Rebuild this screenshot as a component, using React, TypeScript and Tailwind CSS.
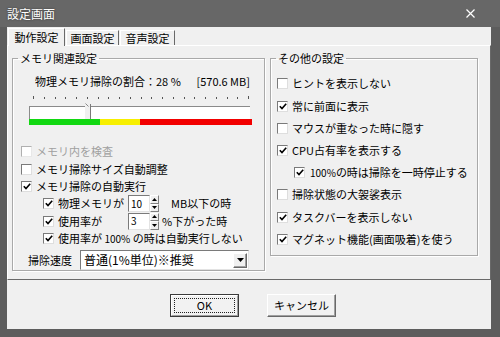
import React from "react";

type CheckProps = { checked?: boolean; disabled?: boolean };

const CheckBox: React.FC<CheckProps> = ({ checked, disabled }) => (
  <span
    className={`flex h-[11px] w-[11px] shrink-0 items-center justify-center border bg-white ${
      disabled
        ? "border-t-[#b0b0b0] border-l-[#b0b0b0] border-r-[#e8e8e8] border-b-[#e8e8e8]"
        : "border-t-[#7a7a7a] border-l-[#7a7a7a] border-r-[#dedede] border-b-[#dedede]"
    }`}
  >
    {checked && (
      <svg width="8" height="7" viewBox="0 0 8 7">
        <path d="M0.8 3.2 L3 5.6 L7.2 0.8" stroke="#000" strokeWidth="1.6" fill="none" />
      </svg>
    )}
  </span>
);

interface RowProps {
  checked?: boolean;
  disabled?: boolean;
  indent: string;
  height: string;
  gap?: string;
  children: React.ReactNode;
}

const CheckRow: React.FC<RowProps> = ({ checked, disabled, indent, height, gap = "gap-[4px]", children }) => (
  <div className={`flex items-center ${indent} ${height} ${gap}`}>
    <CheckBox checked={checked} disabled={disabled} />
    <span className={`whitespace-nowrap leading-none ${disabled ? "text-[#a0a0a0]" : "text-black"}`}>{children}</span>
  </div>
);

const SpinBox: React.FC<{ value: string }> = ({ value }) => (
  <div className="flex h-[17px] items-stretch">
    <div className="flex w-[22px] items-center border border-t-[#7a7a7a] border-l-[#7a7a7a] border-r-[#e3e3e3] border-b-[#e3e3e3] bg-white pl-[2px] text-[10px] leading-none">
      {value}
    </div>
    <div className="flex w-[9px] flex-col">
      <div className="flex flex-1 items-center justify-center border border-t-white border-l-white border-r-[#808080] border-b-[#808080] bg-[#f0f0f0]">
        <svg width="5" height="3" viewBox="0 0 5 3">
          <path d="M0 3 L2.5 0 L5 3 Z" fill="#000" />
        </svg>
      </div>
      <div className="flex flex-1 items-center justify-center border border-t-white border-l-white border-r-[#808080] border-b-[#808080] bg-[#f0f0f0]">
        <svg width="5" height="3" viewBox="0 0 5 3">
          <path d="M0 0 L2.5 3 L5 0 Z" fill="#000" />
        </svg>
      </div>
    </div>
  </div>
);

const MemorySlider: React.FC = () => {
  const ticks = Array.from({ length: 21 }, (_, i) => 4 + i * 10.75);
  return (
    <svg width="224" height="32" viewBox="0 0 224 32" className="ml-[16px] mt-[7px] block">
      {ticks.map((x, i) => (
        <rect
          key={i}
          x={Math.round(x)}
          y={i === 0 || i === 20 ? 1 : 2}
          width="1"
          height={i === 0 || i === 20 ? 3 : 2}
          fill="#555"
        />
      ))}
      {/* track */}
      <rect x="0" y="11" width="221" height="13" fill="#fff" />
      <rect x="0" y="11" width="221" height="1" fill="#8a8a8a" />
      <rect x="0" y="11" width="1" height="13" fill="#8a8a8a" />
      {/* thumb */}
      <polygon points="56,11 58,8 62,11 62,24 56,24" fill="#f0f0f0" />
      <path d="M56.5 8.5 L59.5 11.5" stroke="#8a8a8a" strokeWidth="1" />
      <rect x="61" y="9" width="1" height="15" fill="#7a7a7a" />
      {/* level bar */}
      <rect x="0" y="24" width="71" height="6" fill="#12d812" />
      <rect x="71" y="24" width="40" height="6" fill="#f7ef00" />
      <rect x="111" y="24" width="112" height="6" fill="#f20000" />
    </svg>
  );
};

const App: React.FC = () => {
  return (
    <div className="flex h-[337px] w-[500px] flex-col overflow-hidden bg-[#5d5d5d] font-['Noto_Sans_CJK_JP','Noto_Sans_CJK_SC',sans-serif] text-[11px] text-black">
      {/* title bar */}
      <div className="flex h-[27px] shrink-0 items-center justify-between bg-[#676767] pl-[7px] pr-[25px]">
        <span className="text-[12px] leading-none text-white [text-shadow:0_0_2px_#333]">設定画面</span>
        <svg width="9" height="9" viewBox="0 0 9 9">
          <path d="M0.5 0.5 L8.5 8.5 M8.5 0.5 L0.5 8.5" stroke="#fff" strokeWidth="1.2" />
        </svg>
      </div>

      {/* window body */}
      <div className="ml-[7px] flex h-[302px] w-[484px] shrink-0 flex-col bg-[#f0f0f0]">
        {/* tabs */}
        <div className="flex h-[18px] shrink-0 items-end">
          <div className="relative z-10 -mb-px ml-px flex h-[18px] w-[57px] items-center justify-center border border-b-0 border-t-white border-l-white border-r-[#696969] bg-[#f0f0f0] leading-none">
            動作設定
          </div>
          <div className="ml-px flex h-[15px] w-[53px] items-center justify-center border border-b-0 border-t-white border-l-white border-r-[#696969] leading-none">
            画面設定
          </div>
          <div className="ml-px flex h-[15px] w-[55px] items-center justify-center border border-b-0 border-t-white border-l-white border-r-[#696969] leading-none">
            音声設定
          </div>
        </div>

        {/* tab panel */}
        <div className="flex h-[235px] shrink-0 items-start gap-[5px] border border-t-white border-l-white border-r-[#696969] border-b-[#696969] pl-[4px] pt-[6px]">
          {/* memory group */}
          <fieldset className="h-[219px] w-[253px] border border-[#a9a9a9] shadow-[inset_1px_1px_0_#fff,1px_1px_0_#fff]">
            <legend className="ml-[5px] px-[2px] text-[11px] leading-[12px]">メモリ関連設定</legend>
            <div className="ml-[22px] mt-[10px] flex h-[14px] w-[215px] items-center justify-between text-[11px] leading-none">
              <span>物理メモリ掃除の割合：28 %</span>
              <span>[570.6 MB]</span>
            </div>
            <MemorySlider />
            <div className="mt-[15px]">
              <CheckRow disabled indent="ml-[8px]" height="h-[18px]">
                メモリ内を検査
              </CheckRow>
              <CheckRow indent="ml-[8px]" height="h-[18px]">
                メモリ掃除サイズ自動調整
              </CheckRow>
              <CheckRow checked indent="ml-[8px]" height="h-[17px]">
                メモリ掃除の自動実行
              </CheckRow>
              <div className="ml-[30px] flex h-[17px] items-center">
                <CheckBox checked />
                <span className="ml-[4px] w-[70px] whitespace-nowrap leading-none">物理メモリが</span>
                <SpinBox value="10" />
                <span className="ml-[12px] whitespace-nowrap leading-none">MB以下の時</span>
              </div>
              <div className="ml-[30px] flex h-[18px] items-center">
                <CheckBox checked />
                <span className="ml-[4px] w-[70px] whitespace-nowrap leading-none">使用率が</span>
                <SpinBox value="3" />
                <span className="ml-[3px] whitespace-nowrap leading-none">%下がった時</span>
              </div>
              <CheckRow checked indent="ml-[30px]" height="h-[17px]">
                使用率が <span className="text-[10px]">100%</span> の時は自動実行しない
              </CheckRow>
              <div className="mt-[3px] flex h-[20px] items-center">
                <span className="ml-[15px] w-[52px] whitespace-nowrap leading-none">掃除速度</span>
                <div className="flex h-[20px] w-[169px] items-center justify-between border border-t-[#7a7a7a] border-l-[#7a7a7a] border-r-[#e3e3e3] border-b-[#e3e3e3] bg-white pl-[3px] pr-[1px]">
                  <span className="whitespace-nowrap text-[12px] leading-none">普通(1%単位)※推奨</span>
                  <div className="flex h-[15px] w-[14px] items-center justify-center border border-t-white border-l-white border-r-[#696969] border-b-[#696969] bg-[#f0f0f0] shadow-[inset_-1px_-1px_0_#a0a0a0]">
                    <svg width="7" height="4" viewBox="0 0 7 4">
                      <path d="M0 0 L3.5 4 L7 0 Z" fill="#000" />
                    </svg>
                  </div>
                </div>
              </div>
            </div>
          </fieldset>

          {/* other settings group */}
          <fieldset className="h-[204px] w-[208px] border border-[#a9a9a9] shadow-[inset_1px_1px_0_#fff,1px_1px_0_#fff]">
            <legend className="ml-[5px] px-[2px] text-[11px] leading-[12px]">その他の設定</legend>
            <div className="mt-[8px]">
              <CheckRow indent="ml-[6px]" height="h-[23px]">
                ヒントを表示しない
              </CheckRow>
              <CheckRow checked indent="ml-[6px]" height="h-[22px]">
                常に前面に表示
              </CheckRow>
              <CheckRow indent="ml-[6px]" height="h-[22px]">
                マウスが重なった時に隠す
              </CheckRow>
              <CheckRow checked indent="ml-[6px]" height="h-[22px]">
                CPU占有率を表示する
              </CheckRow>
              <CheckRow checked indent="ml-[23px]" height="h-[22px]" gap="gap-[5px]">
                <span className="text-[10px]">100%</span>の時は掃除を一時停止する
              </CheckRow>
              <CheckRow indent="ml-[6px]" height="h-[23px]">
                掃除状態の大袈裟表示
              </CheckRow>
              <CheckRow checked indent="ml-[6px]" height="h-[22px]">
                タスクバーを表示しない
              </CheckRow>
              <CheckRow checked indent="ml-[6px]" height="h-[22px]">
                マグネット機能(画面吸着)を使う
              </CheckRow>
            </div>
          </fieldset>
        </div>

        {/* footer buttons */}
        <div className="flex gap-[28px] pl-[163px] pt-[14px]">
          <button className="h-[23px] w-[69px] border border-[#3a3a3a] bg-[#f2f2f2] p-0">
            <div className="h-full w-full border border-t-white border-l-white border-r-[#a0a0a0] border-b-[#a0a0a0] p-[2px]">
              <div className="flex h-full w-full items-center justify-center border border-dotted border-[#202020] text-[11px] leading-none">
                OK
              </div>
            </div>
          </button>
          <button className="flex h-[23px] w-[69px] items-center justify-center border border-t-white border-l-white border-r-[#696969] border-b-[#696969] bg-[#f2f2f2] text-[11px] leading-none shadow-[inset_-1px_-1px_0_#a0a0a0]">
            キャンセル
          </button>
        </div>
      </div>
    </div>
  );
};

export default App;
